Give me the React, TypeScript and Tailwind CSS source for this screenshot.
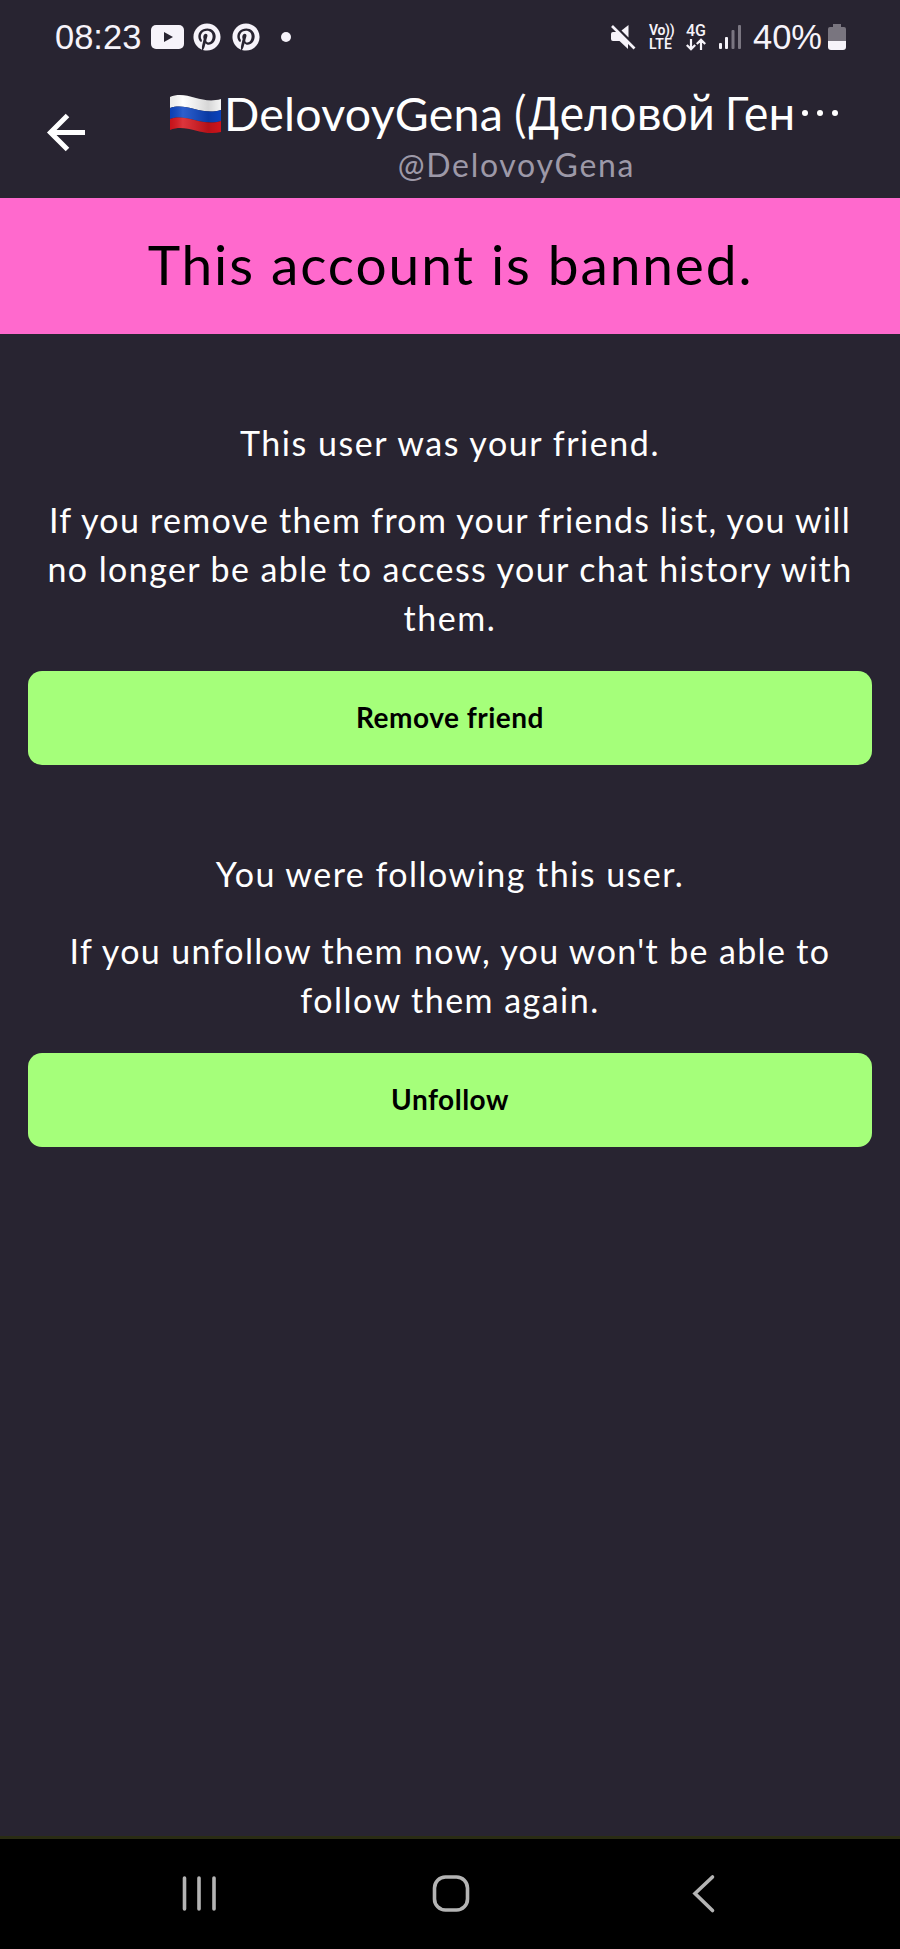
import { FaPinterest } from "react-icons/fa";

export default function App() {
  return (
    <div className="w-[900px] h-[1949px] flex flex-col bg-[#282431] text-white font-['Lato','Noto_Sans',sans-serif] overflow-hidden">
      <StatusBar />
      <Header />

      {/* Banned banner */}
      <div className="h-[136px] shrink-0 bg-[#ff69cd] text-black flex items-center justify-center pb-[4px]">
        <p className="pl-[1px] text-[55px] leading-none tracking-[1.9px] whitespace-nowrap">
          This account is banned.
        </p>
      </div>

      <main className="flex-1 px-[28px] text-[34px] leading-[49px] text-center">
        <section className="pt-[84px]">
          <Line className="tracking-[1.55px]">This user was your friend.</Line>
          <div className="mt-[28px]">
            <Line className="tracking-[1.27px]">
              If you remove them from your friends list, you will
            </Line>
            <Line className="tracking-[1.42px]">
              no longer be able to access your chat history with
            </Line>
            <Line className="tracking-[1.55px]">them.</Line>
          </div>
          <ActionButton>Remove friend</ActionButton>
        </section>

        <section className="pt-[84px]">
          <Line className="tracking-[1.47px]">You were following this user.</Line>
          <div className="mt-[28px]">
            <Line className="tracking-[1.35px]">
              If you unfollow them now, you won't be able to
            </Line>
            <Line className="tracking-[1.47px]">follow them again.</Line>
          </div>
          <ActionButton>Unfollow</ActionButton>
        </section>
      </main>

      <NavBar />
    </div>
  );
}

function StatusBar() {
  return (
    <div className="h-[74px] shrink-0 pl-[55px] pr-[54px] flex items-center justify-between font-['Roboto',sans-serif] text-[#f6f3fa]">
      <div className="flex items-center">
        <span className="w-[96px] text-[34.5px] leading-none font-['Liberation_Sans',sans-serif]">08:23</span>
        <svg width="33" height="24" viewBox="0 0 33 24">
          <rect width="33" height="24" rx="5" fill="currentColor" />
          <path d="M13 7L22 12l-9 5z" fill="#282431" />
        </svg>
        <FaPinterest size={28} className="ml-[9px]" />
        <FaPinterest size={28} className="ml-[11px]" />
        <span className="ml-[21px] w-[10px] h-[10px] rounded-full bg-current" />
      </div>

      <div className="flex items-center">
        {/* Muted speaker */}
        <svg width="26" height="26" viewBox="0 0 26 26" fill="currentColor">
          <path d="M1 10q0-2 2-2h4.500L18 18.500V25L9.500 17H3q-2 0-2-2z" />
          <path d="M11.500 6.500L18.500 1v12.500z" />
          <path d="M2 2l22.500 22.500" stroke="currentColor" strokeWidth="2.600" />
        </svg>
        <div className="ml-[13px] w-[27px] flex flex-col text-[14px] leading-[14px] font-semibold whitespace-nowrap">
          <span className="tracking-[-0.3px]">Vo))</span>
          <span className="tracking-[0.2px]">LTE</span>
        </div>
        <div className="ml-[9px] w-[22px] flex flex-col items-center">
          <span className="text-[16px] leading-[14px] font-medium">4G</span>
          <svg width="20" height="13" viewBox="0 0 20 13" fill="none" stroke="currentColor" strokeWidth="2.200">
            <path d="M5 1v10M.8 7L5 11.300 9.200 7M15 12V2M10.800 6L15 1.700 19.200 6" />
          </svg>
        </div>
        <svg className="ml-[11px]" width="24" height="26" viewBox="0 0 24 26" fill="currentColor">
          <rect x="1" y="19" width="3" height="6" rx="1" />
          <rect x="7" y="13" width="3" height="12" rx="1" />
          <rect x="13.500" y="6" width="3" height="19" rx="1" opacity=".4" />
          <rect x="20" y="1" width="3" height="24" rx="1" opacity=".4" />
        </svg>
        <span className="ml-[11px] w-[73px] text-[34.5px] leading-none font-['Liberation_Sans',sans-serif]">40%</span>
        <svg className="ml-[2px]" width="18" height="26" viewBox="0 0 18 26">
          <path d="M5 0h8v3h3q2 0 2 2v12H0V5q0-2 2-2h3z" fill="#79757f" />
          <path d="M0 17h18v6q0 3-3 3H3q-3 0-3-3z" fill="currentColor" />
        </svg>
      </div>
    </div>
  );
}

function Header() {
  return (
    <header className="h-[124px] shrink-0 flex">
      <svg className="ml-[45px] mt-[38px] shrink-0" width="42" height="42" viewBox="0 0 42 42" fill="none" stroke="white" strokeWidth="5">
        <path d="M40 20.500H6M22.500 3.500L5.500 20.500l17 17" />
      </svg>
      <div className="ml-[82px] flex flex-col">
        <div className="mt-[12px] h-[56px] flex items-center whitespace-nowrap">
          <Flag />
          <span className="ml-[2px] pb-[2px] w-[284px] text-[46.5px] leading-[54px] tracking-[0.25px]">DelovoyGena</span>
          <span className="ml-[4px] pb-[6px] text-[45px] leading-[50px] tracking-[-0.7px] font-['Noto_Sans_CJK_SC',sans-serif]">
            (Деловой Ген
          </span>
          <span className="ml-[7px] pb-[2px] flex gap-[9px]">
            <i className="w-[6px] h-[6px] rounded-full bg-white" />
            <i className="w-[6px] h-[6px] rounded-full bg-white" />
            <i className="w-[6px] h-[6px] rounded-full bg-white" />
          </span>
        </div>
        <p className="w-[695px] text-center text-[32px] leading-[46px] tracking-[1.7px] text-[#9d99a8]">
          @DelovoyGena
        </p>
      </div>
    </header>
  );
}

function Flag() {
  return (
    <svg className="shrink-0" width="53" height="40" viewBox="0 0 53 40">
      <defs>
        <linearGradient id="shade" x1="0" x2="1" y1="0" y2="0">
          <stop offset="0" stopColor="#000" stopOpacity=".08" />
          <stop offset=".25" stopColor="#fff" stopOpacity=".14" />
          <stop offset=".75" stopColor="#000" stopOpacity=".16" />
          <stop offset="1" stopColor="#000" stopOpacity=".04" />
        </linearGradient>
      </defs>
      <path d="M1 3C18-4 32 11 52 5V16C32 22 18 8 1 14z" fill="#fff" />
      <path d="M1 14C18 8 32 22 52 16V27C32 33 18 19 1 25z" fill="#0b45c4" />
      <path d="M1 25C18 19 32 33 52 27V38C32 43 18 29 1 36z" fill="#d8141c" />
      <path d="M1 3C18-4 32 11 52 5V38C32 43 18 29 1 36z" fill="url(#shade)" />
    </svg>
  );
}

function Line({ className, children }: { className: string; children: React.ReactNode }) {
  return <p className={`whitespace-nowrap ${className}`}>{children}</p>;
}

function ActionButton({ children }: { children: React.ReactNode }) {
  return (
    <button className="mt-[29px] pb-[3px] w-full h-[94px] rounded-[14px] bg-[#a5ff7a] text-black text-[28px] leading-none font-bold tracking-[0.5px] flex items-center justify-center">
      {children}
    </button>
  );
}

function NavBar() {
  return (
    <nav className="h-[113px] shrink-0 bg-black border-t-[3px] border-[#2a2c14] flex">
      <svg className="ml-[180px] mt-[35px]" width="38" height="40" viewBox="0 0 38 40" stroke="#b4b4b4" strokeWidth="3.600" strokeLinecap="round">
        <path d="M4.500 4v31M19 4v31M34 4v31" />
      </svg>
      <svg className="ml-[213px] mt-[35px]" width="40" height="40" viewBox="0 0 40 40" fill="none" stroke="#b4b4b4" strokeWidth="3.600">
        <rect x="3.500" y="3" width="33" height="33" rx="11" />
      </svg>
      <svg className="ml-[220px] mt-[35px]" width="26" height="40" viewBox="0 0 26 40" fill="none" stroke="#b4b4b4" strokeWidth="3.600" strokeLinecap="round">
        <path d="M21.500 3L4 19.500l17.500 17" />
      </svg>
    </nav>
  );
}
